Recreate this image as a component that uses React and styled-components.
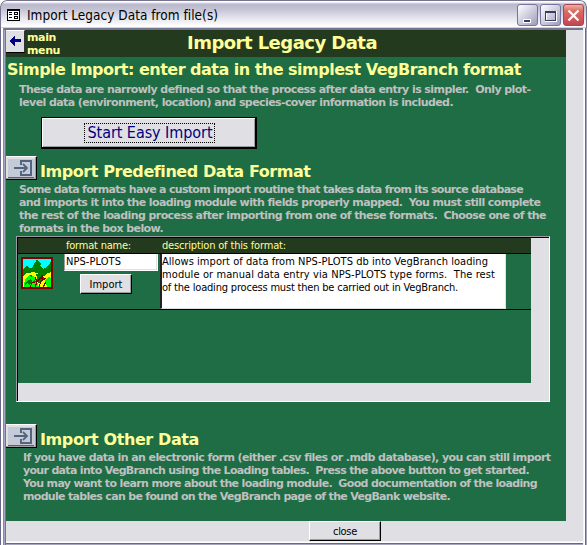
import React, { useLayoutEffect, useRef, useState } from 'react';
import styled, { createGlobalStyle } from 'styled-components';

const Page = createGlobalStyle`
  * { box-sizing: border-box; }
  body { margin: 0; background: #fff; overflow: hidden; }
  button { font: inherit; }
`;
const face = `"DejaVu Sans Condensed", "DejaVu Sans", sans-serif`;
const wideFace = `"DejaVu Sans", sans-serif`;

const Frame = styled.div`
  width: 587px; height: 545px; display: flex; flex-direction: column;
  font-family: ${face}; font-stretch: condensed;
  background: #e0dfe3;
  border-radius: 7px 7px 0 0; overflow: hidden;
`;
const TitleBar = styled.header`
  height: 28px; flex: none; display: flex; align-items: center; padding: 1px 2px 0 6px;
  border: solid #76748f; border-width: 1px 1px 0;
  border-radius: 7px 7px 0 0;
  background: linear-gradient(#fff 0, #fff 1px, #bab9cd 3px, #c3c2d4 8px, #dddde7 15px, #f4f4f8 22px, #fff 25px, #fff 26px, #a7a6c0 27px);
`;
const Caption = styled.div`flex: 1; padding-left: 7px; display: flex;`;
const Controls = styled.div`display: flex; gap: 2px;`;
const Control = styled.button`
  width: 21px; height: 22px; padding: 0; border: 1px solid ${p => (p.$close ? '#a04858' : '#7375a0')};
  border-radius: 3px; display: grid; place-items: center;
  background: ${p => (p.$close
    ? 'linear-gradient(#efb0a0, #dd6a64 30%, #d2555a 70%, #c04850)'
    : 'linear-gradient(135deg, #fff, #c9c9db 55%, #9c9cba)')};
`;
const Client = styled.main`
  flex: 1; display: flex; flex-direction: column;
  padding: 2px 5px 4px 6px;
  background:
    linear-gradient(#76748f 1px, #77757c 1px) 4px 0 / 579px 2px no-repeat,
    linear-gradient(to right, #68668a 1px, #fff 1px, #fff 3px, #68668a 3px, #a7a6c0 4px, #a7a6c0 5px, #77757c 5px) 0 0 / 6px 542px no-repeat,
    linear-gradient(to right, #f4f3ee 1px, #fff 1px, #fff 2px, #68668a 2px, #68668a 3px, #a7a6c0 3px) right 0 top 0 / 4px 542px no-repeat,
    linear-gradient(#f4f3ee 1px, #fff 1px, #fff 2px, #68668a 2px, #68668a 3px, #a7a6c0 3px) 3px bottom / 582px 4px no-repeat,
    #e0dfe3;
`;
const Form = styled.div`width: 560px; height: 491px; background: #1e6d45; flex: none;`;
const Header = styled.div`height: 27px; background: #233a1e; display: flex;`;
const Back = styled.button`
  width: 19px; height: 23px; padding: 0; border: solid; border-width: 1px 1px 1px 0;
  border-color: #fff #333 #000 #fff; background: #e0dfe3;
  display: grid; place-items: center;
`;
const MenuLabel = styled.div`width: 162px; padding: 1px 0 0 2px;`;
const Title = styled.h1`margin: 0; padding-top: 1px;`;

const Row = styled.div`
  width: ${p => p.$w}px; height: ${p => p.$lh}px; line-height: ${p => p.$lh}px;
  font-size: ${p => p.$size}px; font-weight: ${p => (p.$bold ? 700 : 400)};
  ${p => (p.$bold ? `font-family: ${wideFace}; font-stretch: normal;` : '')}
  color: ${p => p.$color}; white-space: pre; text-align: left;
`;
const Run = styled.span`display: inline-block;`;

function Line({ w, lh = 13, size = 11, bold, color = '#000', children }) {
  const ref = useRef(null);
  const [spacing, setSpacing] = useState(0);
  useLayoutEffect(() => {
    const natural = ref.current.getBoundingClientRect().width;
    setSpacing((w - natural) / children.length);
  }, [w, children]);
  return (
    <Row $w={w} $lh={lh} $size={size} $bold={bold} $color={color}>
      <Run ref={ref} style={{ letterSpacing: `${spacing}px` }}>{children}</Run>
    </Row>
  );
}
const Heading = ({ w, size = 16, lh = 20, children }) => (
  <Line w={w} size={size} lh={lh} bold color="#ffff99">{children}</Line>
);
const Para = ({ lines }) => lines.map(([text, w]) => (
  <Line key={text} w={w} bold color="#c0c0c0">{text}</Line>
));

const Simple = styled.section`height: 99px; padding: 3px 0 0 1px;`;
const Indented = styled.div`padding-left: ${p => p.$x}px; padding-top: ${p => p.$top || 0}px;`;
const StartButton = styled.button`
  display: grid; place-items: center; width: 216px; height: 32px; margin: 8px 0 0 34px; padding: 0 0 0 1px;
  border: solid #000; border-width: 1px 2px 2px 1px; background: #e0dfe3;
  box-shadow: inset 1px 1px #fff, inset -1px -1px #9d9ca2;
`;
const Focus = styled.span`
  height: 20px; padding: 0 1px 0 3px; border: 1px dotted #000;
`;
const Section = styled.section`height: ${p => p.$h}px;`;
const SectionHead = styled.div`display: flex; height: 25px; gap: 3px;`;
const HeadText = styled.div`padding-top: 6px;`;
const EnterButton = styled.button`
  width: 31px; height: 24px; padding: 0; background: #c5cbd6;
  border: solid; border-width: 1px 1px 1px 0; border-color: #fff #000 #000;
  box-shadow: inset -1px -1px #9d9ca2, inset 2px 2px #e0dfe3;
  display: grid; place-items: center;
`;
const Subform = styled.div`
  width: 534px; height: 166px; margin: 1px 0 0 10px;
  border: 1px solid; border-color: #9d9ca2 #fff #fff #9d9ca2;
  background: linear-gradient(#000, #000) 0 0 / 1px 100% no-repeat,
    linear-gradient(#000, #000) 0 0 / 100% 1px no-repeat, #e0dfe3;
`;
const Sheet = styled.div`
  width: 514px; height: 146px; padding: 1px 0 0 1px;
  background: linear-gradient(#1e6d45, #1e6d45) 1px 1px no-repeat;
`;
const Columns = styled.div`
  display: grid; grid-template-columns: 46px 96px 1fr; height: ${p => p.$h}px;
  background: ${p => p.$bg || 'transparent'}; border-bottom: 1px solid #000;
`;
const ColumnLabel = styled.div`padding: 1px 0 0 ${p => p.$x}px;`;
const Thumb = styled.svg`margin: 3px 0 0 3px; display: block;`;
const Field = styled.div`
  width: 94px; height: 17px; background: #fff; border: solid; border-width: 0 1px 1px 1px;
  border-color: #fff #fff #fff #9d9ca2; padding-left: 1px; box-shadow: inset -1px -1px #e0dfe3;
`;
const Memo = styled.div`
  width: 346px; height: 55px; background: #fff; padding: 1px 0 0;
  border: solid; border-width: 0 1px 1px 2px; border-color: #fff #e0dfe3 #e0dfe3 #222;
`;
const Button = styled.button`
  width: ${p => p.$w}px; height: 20px; padding: 0; background: #e0dfe3;
  display: grid; place-items: center;
  border: 1px solid; border-color: #fff #000 #000 #fff; box-shadow: inset -1px -1px #9d9ca2;
  margin: ${p => p.$m};
`;

const EnterIcon = () => (
  <svg width="26" height="19" viewBox="0 0 26 19" shapeRendering="crispEdges" fill="none" stroke="#526580">
    <path d="M13 6V2H23V16H13V12" strokeWidth="2" />
    <path d="M6 9H18" strokeWidth="2" />
    <path d="M15 5L19 9L15 13" strokeWidth="1.800" shapeRendering="auto" />
    <path d="M0 18.500H26" />
  </svg>
);
const TreeIcon = () => (
  <Thumb width="32" height="32" viewBox="0 0 32 32" shapeRendering="crispEdges">
    <path fill="#00ffff" d="M0 0h32v32H0z" />
    <path fill="#008000" d="M2 12l2-1 2-3 2 3 3 0 2-4-1 0 3-2 1-3 2 3 2 2-1 1 3 4 2-1 3-3 2-2 1-2 1 0v15H2z" />
    <path fill="#ffff00" d="M2 19l4-3h3l2-1 5 1 4 3 3 0 4-3 3-1v15H2z" />
    <path fill="#008000" d="M15 17l5 1 3 3-2 4-4 1zM22 15l5-2-3 5z" />
    <path fill="#00ff00" d="M3 26l2-5 4-3 4 1 3 5 2 6H3zM24 23l4-3 2 1v9h-4z" />
    <path fill="#008000" d="M4 26l3-3 1 1 2-3 1 4 3-2 1 2-4 1-3 2-1-3-3 3zM9 18l3 1-2 1z" />
    <path fill="none" stroke="#800000" strokeWidth="1.200" d="M14 30l2-5 4-5M16 25l-2-5M18 30l2-6 5-3M21 22l0-4M22 30l3-5M9 30l2-4 3-1" />
    <path fill="none" stroke="#800000" strokeWidth="2" d="M1 1h30v30H1z" />
  </Thumb>
);

export default function App() {
  return (
    <Frame>
      <Page />
      <TitleBar>
        <svg width="13" height="12" viewBox="0 0 13 12" shapeRendering="crispEdges">
          <path fill="#000" d="M0 0h13v12H0z" />
          <path fill="#fff" d="M1 2h11v9H1z" />
          <path fill="#000" d="M2 3h3v1H2zM2 5h3v1H2zM2 8h3v1H2zM7 3h4v3H7zM7 7h4v3H7z" />
          <path fill="#fff" d="M8 4h2v1H8zM8 8h2v1H8z" />
        </svg>
        <Caption><Line w={191} lh={18} size={13.5}>Import Legacy Data from file(s)</Line></Caption>
        <Controls>
          <Control aria-label="Minimize">
            <svg width="15" height="15"><path d="M3 11h8v4H3z" fill="#fff" /><path d="M4 12h6v2H4z" fill="#3c3b60" /></svg>
          </Control>
          <Control aria-label="Maximize">
            <svg width="15" height="15" shapeRendering="crispEdges"><path d="M3 4h10v9H3z" fill="none" stroke="#fff" strokeWidth="2" /><path d="M2.500 3.500h10v9h-10zM2 4.500h11" fill="none" stroke="#3c3b60" /></svg>
          </Control>
          <Control $close aria-label="Close">
            <svg width="15" height="15"><path d="M2.500 2.500l10 10M12.500 2.500l-10 10" stroke="#fff" strokeWidth="2.300" /></svg>
          </Control>
        </Controls>
      </TitleBar>
      <Client>
        <Form>
          <Header>
            <Back aria-label="Back">
              <svg width="13" height="13" shapeRendering="crispEdges"><path d="M0 6l6-6v4h6v3H6v5z" fill="#000080" /></svg>
            </Back>
            <MenuLabel>
              <Line w={29} bold color="#ffff99">main</Line>
              <Line w={33} bold color="#ffff99">menu</Line>
            </MenuLabel>
            <Title><Heading w={190} size={18} lh={23}>Import Legacy Data</Heading></Title>
          </Header>
          <Simple>
            <Heading w={514}>Simple Import: enter data in the simplest VegBranch format</Heading>
            <Indented $x={12} $top={3}>
              <Para lines={[
                ['These data are narrowly defined so that the process after data entry is simpler.  Only plot-', 511],
                ['level data (environment, location) and species-cover information is included.', 434],
              ]} />
            </Indented>
            <StartButton><Focus><Line w={125} lh={18} size={16} color="#000080">Start Easy Import</Line></Focus></StartButton>
          </Simple>
          <Section $h={268}>
            <SectionHead>
              <EnterButton aria-label="Open predefined formats"><EnterIcon /></EnterButton>
              <HeadText><Heading w={270}>Import Predefined Data Format</Heading></HeadText>
            </SectionHead>
            <Indented $x={13} $top={2}>
              <Para lines={[
                ['Some data formats have a custom import routine that takes data from its source database', 504],
                ['and imports it into the loading module with fields properly mapped.  You must still complete', 521],
                ['the rest of the loading process after importing from one of these formats.  Choose one of the', 527],
                ['formats in the box below.', 144],
              ]} />
            </Indented>
            <Subform>
              <Sheet>
                <Columns $h={16} $bg="#233a1e">
                  <span />
                  <ColumnLabel $x={2}><Line w={65} color="#ffff99">format name:</Line></ColumnLabel>
                  <ColumnLabel $x={2}><Line w={124} color="#ffff99">description of this format:</Line></ColumnLabel>
                </Columns>
                <Columns $h={56}>
                  <TreeIcon />
                  <div>
                    <Field><Line w={55} lh={15}>NPS-PLOTS</Line></Field>
                    <Button $w={52} $m="3px 0 0 16px"><Line w={33}>Import</Line></Button>
                  </div>
                  <Memo>
                    <Line w={326}>Allows import of data from NPS-PLOTS db into VegBranch loading</Line>
                    <Line w={333}>module or manual data entry via NPS-PLOTS type forms.  The rest</Line>
                    <Line w={296}>of the loading process must then be carried out in VegBranch.</Line>
                  </Memo>
                </Columns>
              </Sheet>
            </Subform>
          </Section>
          <Section $h={96}>
            <SectionHead>
              <EnterButton aria-label="Open loading tables"><EnterIcon /></EnterButton>
              <HeadText><Heading w={159}>Import Other Data</Heading></HeadText>
            </SectionHead>
            <Indented $x={17} $top={2}>
              <Para lines={[
                ['If you have data in an electronic form (either .csv files or .mdb database), you can still import', 527],
                ['your data into VegBranch using the Loading tables.  Press the above button to get started.', 506],
                ['You may want to learn more about the loading module.  Good documentation of the loading', 514],
                ['module tables can be found on the VegBranch page of the VegBank website.', 427],
              ]} />
            </Indented>
          </Section>
        </Form>
        <Button $w={72} $m="0 0 0 303px"><Line w={24}>close</Line></Button>
      </Client>
    </Frame>
  );
}
